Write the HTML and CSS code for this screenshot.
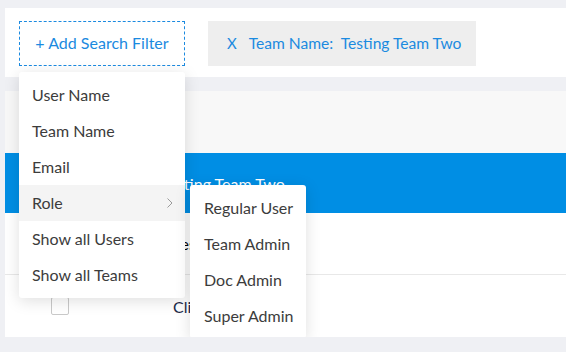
FILE: index.html
```html
<!DOCTYPE html>
<html lang="en">
<head>
    <meta charset="UTF-8">
    <title>Users</title>
    <link rel="stylesheet" href="styles.css">
</head>
<body>
    <div class="barra-filtros">
        <div class="filtro-wrap">
            <button class="btn-filtro">+ Add Search Filter</button>
            <ul class="menu">
                <li class="menu-item">User Name</li>
                <li class="menu-item">Team Name</li>
                <li class="menu-item">Email</li>
                <li class="menu-item activo">
                    Role
                    <svg class="chevron" width="6" height="10" viewBox="0 0 6 10"><polyline points="0.5,0.5 5,5 0.5,9.5" fill="none" stroke="#9a9a9a" stroke-width="1"/></svg>
                    <ul class="submenu">
                        <li class="menu-item">Regular User</li>
                        <li class="menu-item">Team Admin</li>
                        <li class="menu-item">Doc Admin</li>
                        <li class="menu-item">Super Admin</li>
                    </ul>
                </li>
                <li class="menu-item">Show all Users</li>
                <li class="menu-item">Show all Teams</li>
            </ul>
        </div>
        <div class="chip">
            <span class="chip-x">X</span>
            <span>Team Name:&nbsp; Testing Team Two</span>
        </div>
    </div>

    <div class="tabla">
        <div class="fila cabecera"></div>
        <div class="fila seleccionada">
            <span class="check"></span>
            <span class="nombre">Testing Team Two</span>
        </div>
        <div class="fila borde">
            <span class="check"></span>
            <span class="nombre sub">Testers Group</span>
        </div>
        <div class="fila">
            <span class="check"></span>
            <span class="nombre sub oscuro">Client Experience</span>
        </div>
    </div>
</body>
</html>
```

FILE: styles.css
```css
body {
    margin: 0;
    padding: 8px 0 0 5px;
    background: #eff0f4;
    font-family: Lato, "Open Sans", sans-serif;
    overflow: hidden;
}

.barra-filtros {
    background: #fff;
    display: flex;
    gap: 23px;
    padding: 13px 14px 11px;
}

.filtro-wrap {
    position: relative;
}

.btn-filtro {
    width: 166px;
    height: 45px;
    border: 1px dashed #1b8ae0;
    background: #fff;
    color: #1b8ae0;
    font-family: Lato, sans-serif;
    font-size: 16px;
    padding: 0 0 2px;
    cursor: pointer;
}

.chip {
    width: 268px;
    height: 45px;
    box-sizing: border-box;
    background: #eeeeee;
    color: #1b8ae0;
    font-size: 15.6px;
    display: flex;
    align-items: center;
    padding: 0 0 2px 19px;
}

.chip-x {
    margin-right: 12px;
    font-size: 15px;
}

.menu,
.submenu {
    list-style: none;
    margin: 0;
    background: #fff;
    border-radius: 3px;
    box-shadow: 0 3px 16px rgba(0, 0, 0, 0.13);
    z-index: 10;
}

.menu {
    position: absolute;
    top: calc(100% + 6px);
    left: 0;
    width: 166px;
    padding: 5px 0;
}

.menu-item {
    position: relative;
    height: 36px;
    box-sizing: border-box;
    display: flex;
    align-items: center;
    padding: 0 0 2px 13px;
    font-size: 16px;
    color: #3c3c3c;
}

.menu-item.activo {
    background: #f4f4f4;
}

.chevron {
    position: absolute;
    right: 12px;
    top: 13px;
}

.submenu {
    position: absolute;
    top: 0;
    left: 171px;
    width: 116px;
    padding: 5px 0 4px;
}

.submenu .menu-item {
    padding-left: 14px;
}

.tabla {
    margin-top: 14px;
    background: #fff;
}

.fila {
    height: 62px;
    box-sizing: border-box;
    display: flex;
    align-items: center;
    padding-left: 46px;
    font-size: 16px;
}

.cabecera {
    background: #f8f8f8;
}

.seleccionada {
    height: 60px;
    background: #008ee4;
    color: #fff;
}

.borde {
    border-bottom: 1px solid #e8e8e8;
}

.check {
    width: 16px;
    height: 16px;
    border: 1px solid #c9c9c9;
    border-radius: 2px;
    background: #fff;
    margin-right: 92px;
}

.nombre.sub {
    margin-left: 12px;
}

.oscuro {
    color: #1d2a4a;
}
```
